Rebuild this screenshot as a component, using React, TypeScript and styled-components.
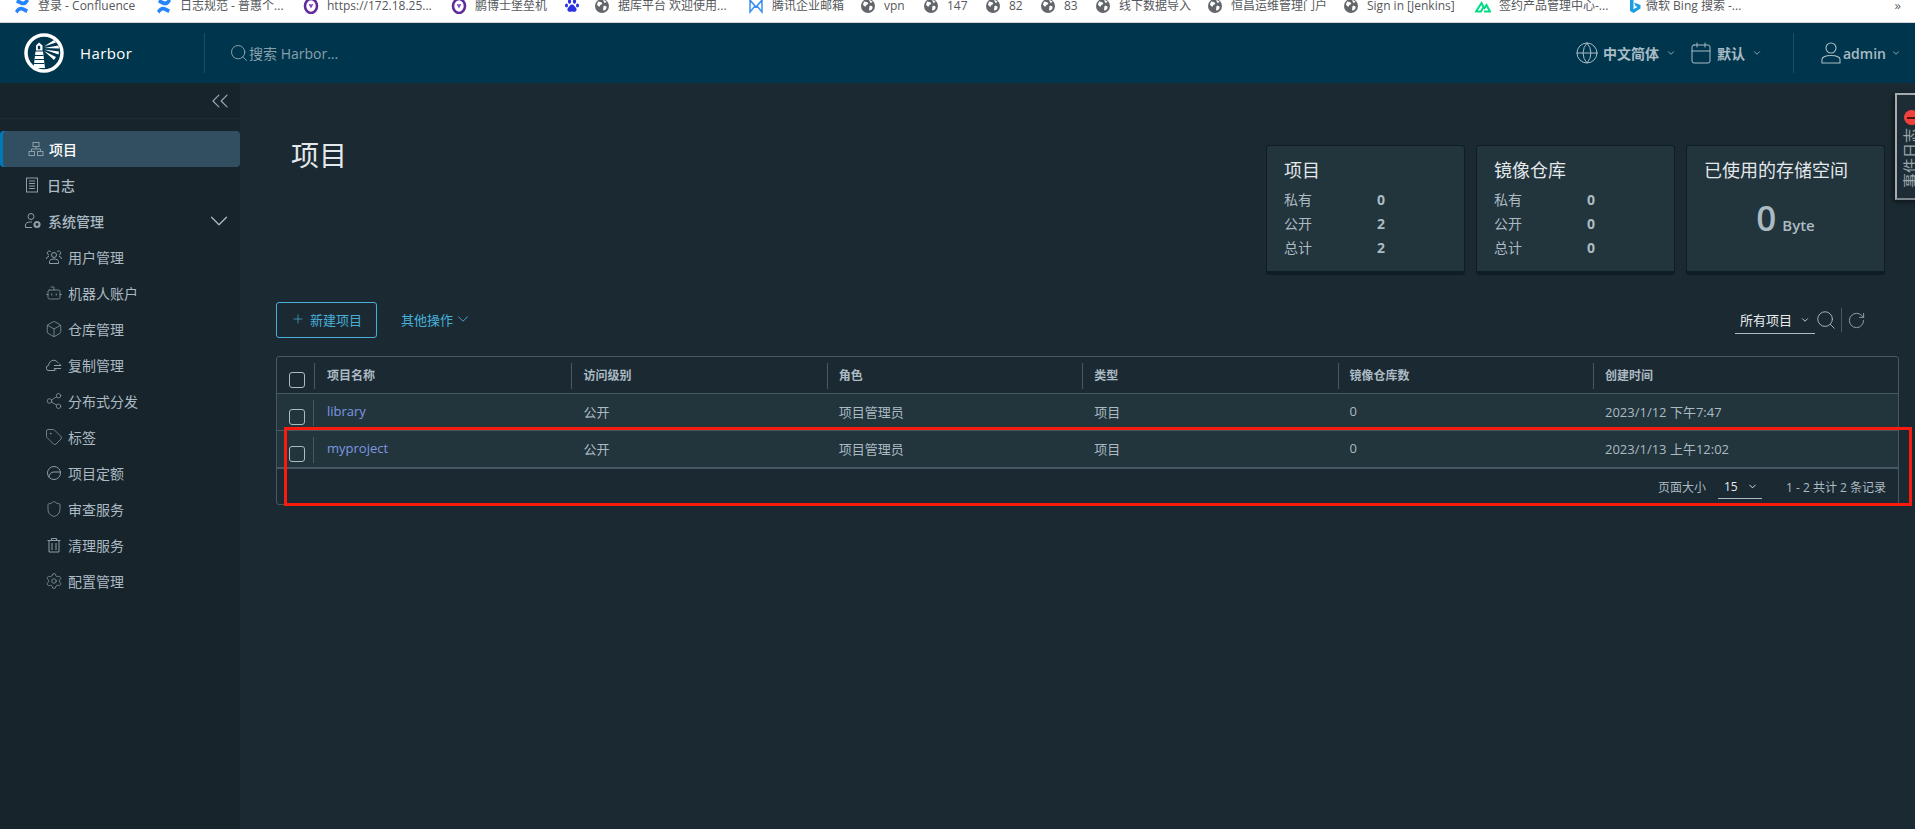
import React from 'react'
import styled, { createGlobalStyle } from 'styled-components'
import {
  Bot, Box, Calendar, ChevronDown, ChevronsLeft, Globe, Plus, RotateCw, Search,
  Settings, Share2, Shield, Tag,
} from 'lucide-react'

const CJK = `"Open Sans", "Noto Sans CJK SC", sans-serif`

const Global = createGlobalStyle`
  html, body { margin: 0; padding: 0; height: 100%; overflow: hidden; background: #1b2a32; }
  #root { height: 100%; }
  * { box-sizing: border-box; }
`

const Page = styled.div`
  position: relative;
  width: 1915px;
  height: 829px;
  overflow: hidden;
  display: flex;
  flex-direction: column;
  font-family: ${CJK};
  color: #acbac3;
`

/* ---- browser bookmark bar ---- */
const BookmarkBar = styled.div`
  height: 23px;
  flex: none;
  display: flex;
  padding-left: 14px;
  background: #fff;
  border-bottom: 1px solid #d4d4d4;
  overflow: hidden;
  position: relative;
`
const Bookmark = styled.div<{ $w: number }>`
  flex: none;
  width: ${p => p.$w}px;
  height: 11px;
  display: flex;
  align-items: center;
  gap: 8px;
  font-size: 12px;
  line-height: 11px;
  color: #55585c;
  white-space: nowrap;
  svg { flex: none; }
`
const BarMore = styled.span`
  position: absolute;
  right: 14px;
  top: 0;
  font-size: 13px;
  line-height: 11px;
  color: #666;
`

const Conf = () => (
  <svg width="16" height="16" viewBox="0 0 16 16" fill="none">
    <path d="M1 13c3-5 6-5 9-3.500l4 2-1.500 3.500-4-2c-2-1-3-.5-5 2.500z" fill="#2684ff" />
    <path d="M15 3c-3 5-6 5-9 3.500l-4-2L3.500 1l4 2c2 1 3 .5 5-2.500z" fill="#2684ff" />
  </svg>
)
const Purple = () => (
  <svg width="16" height="16" viewBox="0 0 16 16" fill="none">
    <ellipse cx="8" cy="8" rx="6" ry="7" stroke="#5f2c9e" strokeWidth="2.600" />
    <path d="M8 10.500 5.800 6.500c1-.8 1.700-.5 2.200.3.500-.8 1.200-1.100 2.200-.3z" fill="#8a46c8" />
  </svg>
)
const Paw = () => (
  <svg width="16" height="16" viewBox="0 0 16 16" fill="#2932e1">
    <ellipse cx="5.500" cy="3.500" rx="1.600" ry="2.200" />
    <ellipse cx="10.500" cy="3.500" rx="1.600" ry="2.200" />
    <ellipse cx="2.500" cy="7.500" rx="1.500" ry="2" />
    <ellipse cx="13.500" cy="7.500" rx="1.500" ry="2" />
    <path d="M8 6.500c2 0 2.500 2 4 3.500 1.500 2 0 4-2 3.800-1-.1-1.300-.4-2-.4s-1 .3-2 .4c-2 .2-3.500-1.800-2-3.800C5.500 8.500 6 6.500 8 6.500z" />
  </svg>
)
const Earth = () => (
  <svg width="16" height="16" viewBox="0 0 16 16">
    <circle cx="8" cy="8" r="7" fill="#62666b" />
    <path d="M4 3.500c2 .5 3 0 4 1.500s-2 1.500-2 3-2.500 0-3-1.500zM9.500 8c2-.5 3.500.5 3 2s-2 3-3 2.500 0-3 0-4.500zM9 2c1.500 0 3 1 3.500 2L10.500 5z" fill="#fff" />
  </svg>
)
const Mail = () => (
  <svg width="16" height="16" viewBox="0 0 16 16" fill="none" stroke="#3b8ff0" strokeWidth="1.500">
    <path d="M2 2v12l5-6zM14 2v12L9 8zM2 2l6 7 6-7" />
  </svg>
)
const Nuxt = () => (
  <svg width="16" height="16" viewBox="0 0 16 16" fill="none" stroke="#00dc82" strokeWidth="2">
    <path d="M1 13.500h5L8.500 9l-2-4zM9 13.500h6L11.500 7 9 11" />
  </svg>
)
const Bing = () => (
  <svg width="12" height="16" viewBox="0 0 12 16" style={{ marginRight: -3 }}>
    <path d="M1 0l3.500 1.200v10l4-2.300-2-1L5 4.500l6.500 2.500v3.500L4.500 15 1 13z" fill="#1b9de2" />
  </svg>
)

const bookmarks: { w: number; icon: React.ReactNode; text?: string }[] = [
  { w: 142, icon: <Conf />, text: '登录 - Confluence' },
  { w: 147, icon: <Conf />, text: '日志规范 - 普惠个...' },
  { w: 148, icon: <Purple />, text: 'https://172.18.25...' },
  { w: 113, icon: <Purple />, text: '鹏博士堡垒机' },
  { w: 30, icon: <Paw /> },
  { w: 154, icon: <Earth />, text: '据库平台  欢迎使用...' },
  { w: 112, icon: <Mail />, text: '腾讯企业邮箱' },
  { w: 63, icon: <Earth />, text: 'vpn' },
  { w: 62, icon: <Earth />, text: '147' },
  { w: 55, icon: <Earth />, text: '82' },
  { w: 55, icon: <Earth />, text: '83' },
  { w: 112, icon: <Earth />, text: '线下数据导入' },
  { w: 136, icon: <Earth />, text: '恒昌运维管理门户' },
  { w: 132, icon: <Earth />, text: 'Sign in [Jenkins]' },
  { w: 154, icon: <Nuxt />, text: '签约产品管理中心-...' },
  { w: 130, icon: <Bing />, text: '微软 Bing 搜索 -...' },
]

/* ---- app header ---- */
const Header = styled.header`
  height: 60px;
  flex: none;
  display: flex;
  align-items: center;
  background: #00364d;
  color: #fff;
`
const Brand = styled.div`
  width: 205px;
  height: 40px;
  flex: none;
  padding-left: 24px;
  display: flex;
  align-items: center;
  gap: 16px;
  font-size: 15px;
  letter-spacing: .4px;
  border-right: 1px solid #1c4d63;
`
const SearchBox = styled.div`
  flex: 1;
  padding-left: 24px;
  display: flex;
  align-items: center;
  font-size: 14px;
  color: #8aa0ab;
  svg { color: #9fb2bc; }
`
const HeaderMenu = styled.div<{ $gap?: number }>`
  display: flex;
  align-items: center;
  gap: 4px;
  margin-right: ${p => p.$gap ?? 0}px;
  font-size: 14px;
  font-weight: 600;
  color: #a9bbc5;
  svg { color: #a9bbc5; }
`
const UserMenu = styled(HeaderMenu)`
  height: 40px;
  width: 122px;
  padding-left: 27px;
  border-left: 1px solid #1c4d63;
  gap: 2px;
`
const Caret = styled(ChevronDown)`
  margin-left: 3px;
`

const Logo = () => (
  <svg width="40" height="40" viewBox="0 0 40 40" fill="none">
    <circle cx="20" cy="20" r="18" stroke="#fff" strokeWidth="3.500" />
    <path d="M15 9.500l3.500 3v5H12v-5z" fill="#fff" />
    <rect x="13.800" y="12.800" width="2.400" height="3.500" fill="#00364d" />
    <path d="M11.500 18.500h7.500l2 16.500H9.500z" fill="#fff" />
    <path d="M11 22.500h8.500M10.500 26.500h9.500M10 30.500h10.500" stroke="#00364d" strokeWidth="1.100" />
    <path d="M20 13.500 30 7l2 2.500zM20 15l14.500-2.500.5 3zM20 16.500l15 2-.5 3zM20 18l12 6-2 3z" fill="#fff" />
  </svg>
)
const UserIcon = () => (
  <svg width="20" height="22" viewBox="0 0 20 22" fill="none" stroke="currentColor" strokeWidth="1.100">
    <circle cx="10" cy="6" r="5" />
    <path d="M1 21v-3.500c0-2 3-4 9-4s9 2 9 4V21z" />
  </svg>
)

/* ---- sidebar ---- */
const Body = styled.div`
  flex: 1;
  display: flex;
  min-height: 0;
`
const Sidebar = styled.nav`
  width: 240px;
  flex: none;
  background: #17242b;
`
const Collapse = styled.div`
  height: 36px;
  display: flex;
  align-items: center;
  justify-content: flex-end;
  padding-right: 6px;
  margin-bottom: 13px;
  border-bottom: 1px solid #1f2e36;
  color: #9aa9b2;
`
const NavList = styled.div`
  margin-top: -1px;
`
const NavItem = styled.div<{ $active?: boolean; $child?: boolean }>`
  height: 36px;
  display: flex;
  align-items: center;
  gap: ${p => (p.$child ? 6 : 8)}px;
  padding-left: ${p => (p.$child ? 46 : 25)}px;
  font-size: 14px;
  font-weight: ${p => (p.$child ? 400 : 500)};
  color: ${p => (p.$active ? '#fff' : '#acbac3')};
  background: ${p => (p.$active ? '#324f61' : 'transparent')};
  border-radius: ${p => (p.$active ? '4px' : '0')};
  box-shadow: ${p => (p.$active ? 'inset 3px 0 0 #0079b8' : 'none')};
  svg { color: #8e9ea7; flex: none; }
  svg.lucide { margin: 0 -1px; }
`
const NavArrow = styled(ChevronDown)`
  margin-left: auto !important;
  margin-right: 6px !important;
  color: #acbac3 !important;
`

const ProjectsIcon = () => (
  <svg width="16" height="16" viewBox="0 0 16 16" fill="none" stroke="currentColor" style={{ marginLeft: 3, marginRight: -3 }}>
    <rect x="5" y="1.500" width="6" height="4" />
    <rect x="1" y="10.500" width="5.500" height="4" />
    <rect x="9.500" y="10.500" width="5.500" height="4" />
    <path d="M8 5.500V8M3.500 10.500V8h9v2.500" />
  </svg>
)
const LogsIcon = () => (
  <svg width="14" height="16" viewBox="0 0 14 16" fill="none" stroke="currentColor">
    <rect x="1.500" y="1" width="11" height="14" />
    <path d="M4 4h6M4 6.500h6M4 9h6M4 11.500h6" />
  </svg>
)
const AdminIcon = () => (
  <svg width="16" height="16" viewBox="0 0 16 16" fill="none" stroke="currentColor" style={{ marginRight: -1 }}>
    <circle cx="6" cy="3.500" r="3" />
    <path d="M.5 14.500v-2.500c0-2 2-3 5-3h1.500M.5 14.500H7" />
    <circle cx="12" cy="11.500" r="2.500" strokeWidth="2.200" />
  </svg>
)
const UsersIcon = () => (
  <svg width="16" height="16" viewBox="0 0 16 16" fill="none" stroke="currentColor">
    <circle cx="8" cy="6" r="2.500" />
    <path d="M3.500 14.500v-2c0-1.500 2-2.500 4.500-2.500s4.500 1 4.500 2.500v2zM5 3a2 2 0 1 0-2 3M11 3a2 2 0 1 1 2 3M.5 10c0-1.500 1-2.500 2.500-2.500M15.500 10c0-1.500-1-2.500-2.500-2.500" />
  </svg>
)
const ReplicationIcon = () => (
  <svg width="16" height="16" viewBox="0 0 16 16" fill="none" stroke="currentColor">
    <path d="M9 13.500H3a2.500 2.500 0 0 1-.5-5C3 5 6 2.500 9 3.500c1.500.5 2.500 1.500 3 2.500" />
    <path d="M8 8.500h7M13 6.500l2 2M8 11.500h7M10 13.500l-2-2" />
  </svg>
)
const QuotaIcon = () => (
  <svg width="16" height="16" viewBox="0 0 16 16" fill="none" stroke="currentColor">
    <circle cx="8" cy="8" r="6.500" />
    <path d="M3 12.500C3 9 5 7 8 7h6.500" />
  </svg>
)
const CleanIcon = () => (
  <svg width="16" height="16" viewBox="0 0 16 16" fill="none" stroke="currentColor">
    <path d="M1.500 3.500h13M5.500 3.500V1.500h5v2M3 3.500v11.500h10V3.500M6 6v7M10 6v7" />
  </svg>
)

/* ---- main ---- */
const Main = styled.main`
  flex: 1;
  min-width: 0;
  background: #1b2a32;
  padding: 62px 16px 0 36px;
`
const TopRow = styled.div`
  display: flex;
  justify-content: space-between;
  padding: 0 14px 0 15px;
`
const Title = styled.h1`
  margin: -9px 0 0;
  font-size: 28px;
  line-height: 38px;
  font-weight: 400;
  color: #e3e8eb;
`
const Stats = styled.div`
  display: flex;
  gap: 11px;
`
const StatCard = styled.section`
  width: 199px;
  height: 130px;
  padding: 11px 17px 0;
  background: #22343c;
  border: 1px solid #101d24;
  border-bottom-width: 4px;
  border-radius: 3px;
`
const StatTitle = styled.div`
  font-size: 18px;
  line-height: 26px;
  color: #e3e8eb;
  margin-bottom: 4px;
`
const StatRow = styled.div`
  display: grid;
  grid-template-columns: 93px 1fr;
  height: 24px;
  align-items: center;
  font-size: 14px;
  b { font-weight: 700; color: #acbac3; }
`
const Storage = styled.div`
  display: flex;
  justify-content: center;
  align-items: baseline;
  gap: 6px;
  margin-top: 14px;
  color: #acbac3;
  font-weight: 600;
  font-size: 15px;
  b { font-size: 35px; line-height: 42px; font-weight: 600; }
`

const Toolbar = styled.div`
  display: flex;
  align-items: center;
  height: 36px;
  margin-top: 27px;
`
const NewButton = styled.button`
  width: 101px;
  height: 36px;
  padding: 0 0 2px 14px;
  display: flex;
  align-items: center;
  gap: 5px;
  font: inherit;
  font-size: 13px;
  color: #49afd9;
  background: transparent;
  border: 1px solid #49afd9;
  border-radius: 3px;
`
const MoreLink = styled.div`
  margin-left: 24px;
  padding-bottom: 2px;
  display: flex;
  align-items: center;
  gap: 1px;
  font-size: 13px;
  color: #49afd9;
`
const FilterGroup = styled.div`
  margin-left: auto;
  display: flex;
  align-items: center;
  height: 28px;
  padding-right: 33px;
  color: #acbac3;
`
const FilterSelect = styled.div`
  width: 80px;
  height: 28px;
  display: flex;
  align-items: center;
  gap: 8px;
  padding-left: 5px;
  font-size: 13px;
  color: #e9ecef;
  border-bottom: 1px solid #acbac3;
`
const Divider = styled.span`
  width: 1px;
  height: 24px;
  margin: 0 5px 0 4px;
  background: #485764;
`

const Table = styled.div`
  margin-top: 18px;
  border: 1px solid #485764;
  border-radius: 3px;
`
const Row = styled.div<{ $head?: boolean; $last?: boolean }>`
  display: grid;
  grid-template-columns: 38px 256.4px repeat(4, 255.4px) 1fr;
  height: ${p => (p.$last ? 38 : 37)}px;
  font-size: ${p => (p.$head ? 12 : 13)}px;
  font-weight: ${p => (p.$head ? 600 : 400)};
  background: ${p => (p.$head ? 'transparent' : '#22343c')};
  border-bottom: ${p => (p.$last ? 2 : 1)}px solid #485764;
`
const CheckCell = styled.div<{ $head?: boolean }>`
  position: relative;
  display: flex;
  align-items: flex-end;
  padding: 0 0 5px 12px;
  &::after {
    content: '';
    position: absolute;
    right: ${p => (p.$head ? 0 : 1)}px;
    top: 6px;
    bottom: 4px;
    width: 1px;
    background: #485764;
  }
`
const Check = styled.span`
  width: 16px;
  height: 16px;
  border: 1px solid #acbac3;
  border-radius: 3px;
`
const Cell = styled.div<{ $head?: boolean }>`
  position: relative;
  display: flex;
  align-items: center;
  padding-left: 12px;
  padding-bottom: ${p => (p.$head ? 0 : 2)}px;
  ${p => p.$head && `
    &:not(:nth-child(2))::before {
      content: '';
      position: absolute;
      left: 0;
      top: 6px;
      bottom: 4px;
      width: 1px;
      background: #485764;
    }
  `}
`
const NameLink = styled.span`
  color: #7d97e0;
`
const TableFooter = styled.div`
  height: 35px;
  display: flex;
  align-items: center;
  justify-content: flex-end;
  padding-right: 12px;
  font-size: 12px;
`
const PageSelect = styled.div`
  width: 44px;
  height: 24px;
  margin: 0 24px 0 12px;
  padding-left: 6px;
  display: flex;
  align-items: center;
  gap: 9px;
  color: #e9ecef;
  border-bottom: 1px solid #acbac3;
`

/* ---- things lying over the page ---- */
const RedMark = styled.div`
  position: absolute;
  left: 284px;
  top: 427px;
  width: 1628px;
  height: 79px;
  border: 3px solid #fa1a0e;
  pointer-events: none;
`
const SideTab = styled.div`
  position: absolute;
  left: 1895px;
  top: 93px;
  width: 30px;
  height: 107px;
  padding: 15px 0 0 4px;
  background: #1e2d35;
  border: 2px solid #a4acb0;
  border-width: 2px 0 2px 2px;
  border-bottom-color: #7d8589;
  box-shadow: -2px 2px 5px rgba(0, 0, 0, .5);
`
const SideBadge = styled.span`
  display: block;
  width: 15px;
  height: 15px;
  margin-left: 3px;
  border-radius: 50%;
  background: #f2413d;
  position: relative;
  &::after {
    content: '';
    position: absolute;
    left: 3px;
    right: 3px;
    top: 7px;
    height: 1.500px;
    background: #4a1512;
  }
`
const SideLabel = styled.span`
  display: block;
  margin-top: 3px;
  writing-mode: vertical-rl;
  text-orientation: sideways;
  transform: rotate(180deg);
  width: 18px;
  font-size: 15px;
  line-height: 18px;
  color: #9ba6ac;
`

const navChildren: [React.ReactNode, string][] = [
  [<UsersIcon />, '用户管理'],
  [<Bot size={18} strokeWidth={1} />, '机器人账户'],
  [<Box size={18} strokeWidth={1} />, '仓库管理'],
  [<ReplicationIcon />, '复制管理'],
  [<Share2 size={18} strokeWidth={1} />, '分布式分发'],
  [<Tag size={18} strokeWidth={1} />, '标签'],
  [<QuotaIcon />, '项目定额'],
  [<Shield size={18} strokeWidth={1} />, '审查服务'],
  [<CleanIcon />, '清理服务'],
  [<Settings size={18} strokeWidth={1} />, '配置管理'],
]

const heads = ['项目名称', '访问级别', '角色', '类型', '镜像仓库数', '创建时间']
const rows = [
  ['library', '公开', '项目管理员', '项目', '0', '2023/1/12 下午7:47'],
  ['myproject', '公开', '项目管理员', '项目', '0', '2023/1/13 上午12:02'],
]

export default function App() {
  return (
    <Page>
      <Global />
      <BookmarkBar>
        {bookmarks.map((b, i) => (
          <Bookmark key={i} $w={b.w}>{b.icon}{b.text && <span>{b.text}</span>}</Bookmark>
        ))}
        <BarMore>»</BarMore>
      </BookmarkBar>

      <Header>
        <Brand><Logo /><span>Harbor</span></Brand>
        <SearchBox><Search size={20} strokeWidth={1} /><span>搜索 Harbor...</span></SearchBox>
        <HeaderMenu $gap={13}>
          <Globe size={24} strokeWidth={1} />中文简体<Caret size={10} />
        </HeaderMenu>
        <HeaderMenu $gap={31}>
          <Calendar size={24} strokeWidth={1} />默认<Caret size={10} />
        </HeaderMenu>
        <UserMenu><UserIcon />admin<Caret size={10} /></UserMenu>
      </Header>

      <Body>
        <Sidebar>
          <Collapse><ChevronsLeft size={28} strokeWidth={1} /></Collapse>
          <NavList>
            <NavItem $active><ProjectsIcon />项目</NavItem>
            <NavItem><LogsIcon />日志</NavItem>
            <NavItem><AdminIcon />系统管理<NavArrow size={30} strokeWidth={1} /></NavItem>
            {navChildren.map(([icon, label]) => (
              <NavItem $child key={label}>{icon}{label}</NavItem>
            ))}
          </NavList>
        </Sidebar>

        <Main>
          <TopRow>
            <Title>项目</Title>
            <Stats>
              <StatCard>
                <StatTitle>项目</StatTitle>
                <StatRow>私有<b>0</b></StatRow>
                <StatRow>公开<b>2</b></StatRow>
                <StatRow>总计<b>2</b></StatRow>
              </StatCard>
              <StatCard>
                <StatTitle>镜像仓库</StatTitle>
                <StatRow>私有<b>0</b></StatRow>
                <StatRow>公开<b>0</b></StatRow>
                <StatRow>总计<b>0</b></StatRow>
              </StatCard>
              <StatCard>
                <StatTitle>已使用的存储空间</StatTitle>
                <Storage><b>0</b>Byte</Storage>
              </StatCard>
            </Stats>
          </TopRow>

          <Toolbar>
            <NewButton><Plus size={14} strokeWidth={1.200} />新建项目</NewButton>
            <MoreLink>其他操作<ChevronDown size={18} strokeWidth={1.200} /></MoreLink>
            <FilterGroup>
              <FilterSelect>所有项目<ChevronDown size={10} /></FilterSelect>
              <Search size={22} strokeWidth={1} />
              <Divider />
              <RotateCw size={19} strokeWidth={1} />
            </FilterGroup>
          </Toolbar>

          <Table>
            <Row $head>
              <CheckCell $head><Check /></CheckCell>
              {heads.map(h => <Cell $head key={h}>{h}</Cell>)}
            </Row>
            {rows.map((r, i) => (
              <Row key={r[0]} $last={i === rows.length - 1}>
                <CheckCell><Check /></CheckCell>
                <Cell><NameLink>{r[0]}</NameLink></Cell>
                {r.slice(1).map((c, j) => <Cell key={j}>{c}</Cell>)}
              </Row>
            ))}
            <TableFooter>
              页面大小
              <PageSelect>15<ChevronDown size={11} /></PageSelect>
              1 - 2 共计 2 条记录
            </TableFooter>
          </Table>
        </Main>
      </Body>

      <RedMark />
      <SideTab>
        <SideBadge />
        <SideLabel>事件日志</SideLabel>
      </SideTab>
    </Page>
  )
}
